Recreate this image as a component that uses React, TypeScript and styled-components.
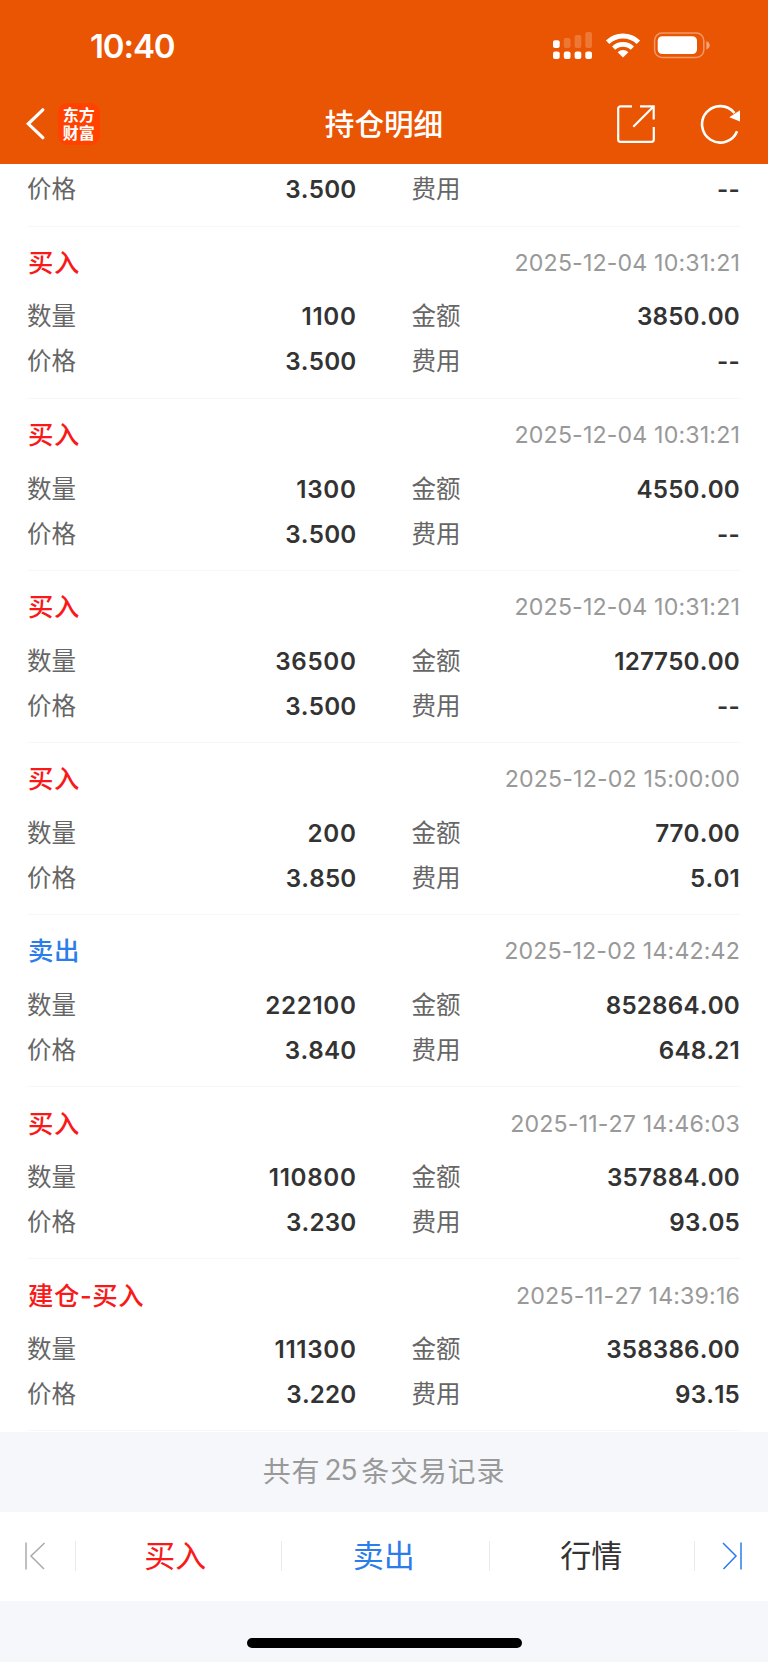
import React from "react";
import styled, { createGlobalStyle } from "styled-components";

const GlobalStyle = createGlobalStyle`
  * { box-sizing: border-box; }
  body {
    margin: 0;
    background: #f6f7fa;
    font-family: Inter, "Noto Sans CJK SC", sans-serif;
    -webkit-font-smoothing: antialiased;
  }
`;

const Screen = styled.div`
  width: 768px;
  height: 1662px;
  overflow: hidden;
  display: flex;
  flex-direction: column;
  background: #f6f7fa;
`;

const Header = styled.header`
  flex: none;
  height: 163.5px;
  background: #ea5504;
  color: #fff;
`;

const StatusBar = styled.div`
  height: 84px;
  padding: 8px 58px 0 90px;
  display: flex;
  align-items: center;
  justify-content: space-between;
`;

const Clock = styled.span`
  font-size: 33px;
  line-height: 40px;
  font-weight: 600;
  letter-spacing: -1.1px;
`;

const NavBar = styled.div`
  height: 79.5px;
  padding: 0 26px 0 26px;
  display: grid;
  grid-template-columns: 200px 1fr 200px;
  align-items: center;
`;

const NavLeft = styled.div`
  display: flex;
  align-items: center;
  gap: 12px;
`;

const NavRight = styled.div`
  display: flex;
  align-items: center;
  justify-content: flex-end;
  gap: 45px;
`;

const NavTitle = styled.h1`
  margin: 0;
  text-align: center;
  font-size: 29.6px;
  line-height: 40px;
  font-weight: 500;
`;

const Logo = styled.div`
  width: 42.5px;
  height: 42.5px;
  border-radius: 9px;
  background: #ff4200;
  display: flex;
  flex-direction: column;
  align-items: center;
  justify-content: center;
  font-size: 16px;
  line-height: 18px;
  font-weight: 700;
`;

const List = styled.main`
  flex: none;
  height: 1268px;
  background: #fff;
  padding: 0 27px;
`;

const Entry = styled.section<{ $partial?: boolean }>`
  height: ${(p) => (p.$partial ? "63.1px" : "172.13px")};
  padding-top: ${(p) => (p.$partial ? "3px" : "14.4px")};
  border-bottom: 1.5px solid #f6f7f8;
`;

const EntryHead = styled.div`
  height: 53.4px;
  padding: 0 1px;
  display: flex;
  justify-content: space-between;
  line-height: 44px;
`;

const toneColors = { buy: "#fa1919", sell: "#2b7de9", plain: "#333" };
type Tone = keyof typeof toneColors;

const Kind = styled.span<{ $tone: Tone }>`
  color: ${(p) => toneColors[p.$tone]};
  font-size: 25.4px;
  font-weight: 500;
  letter-spacing: 0.6px;
`;

const Stamp = styled.time`
  color: #999;
  font-size: 23.2px;
  font-kerning: none;
  letter-spacing: 0.14px;
`;

const Pair = styled.div`
  height: 45px;
  display: grid;
  grid-template-columns: 329.5px 1fr;
  column-gap: 55px;
  padding: 0 1px 0 0;
`;

const Cell = styled.div`
  display: flex;
  align-items: center;
  justify-content: space-between;
  line-height: 45px;
`;

const Label = styled.span`
  color: #666;
  font-size: 24.5px;
`;

const Value = styled.span<{ $whole?: boolean }>`
  color: #333;
  font-size: 24.2px;
  font-weight: 600;
  letter-spacing: ${(p) => (p.$whole ? "0.65px" : "0.2px")};
  font-kerning: none;
`;

const Summary = styled.div`
  flex: none;
  height: 80.5px;
  padding-bottom: 3px;
  display: flex;
  align-items: center;
  justify-content: center;
  color: #999;
  font-size: 28px;
  letter-spacing: 0.8px;
`;

const Count = styled.span`
  margin: 0 4.500px 0 4px;
  letter-spacing: -0.900px;
`;

const ActionBar = styled.footer`
  flex: none;
  height: 88.5px;
  background: #fff;
  display: grid;
  grid-template-columns: 75px 206px 208px 205px 1fr;
  align-items: center;
`;

const Action = styled.div<{ $tone: Tone; $shift?: number }>`
  height: 30px;
  display: flex;
  align-items: center;
  justify-content: center;
  border-left: 1px solid #e9eaec;
  padding-right: ${(p) => p.$shift ?? 0}px;
  color: ${(p) => toneColors[p.$tone]};
  font-size: 31px;
  line-height: 30px;
`;

const Pager = styled.div<{ $end?: boolean }>`
  height: 30px;
  display: flex;
  align-items: center;
  padding-left: ${(p) => (p.$end ? "27px" : "25px")};
  border-left: ${(p) => (p.$end ? "1px solid #e9eaec" : "none")};
`;

const HomeArea = styled.div`
  flex: 1;
  display: flex;
  justify-content: center;
  padding-top: 37.5px;
`;

const HomeIndicator = styled.div`
  width: 275px;
  height: 9.5px;
  border-radius: 5px;
  background: #000;
`;

const StatusIcons = () => (
  <svg width="157" height="28" viewBox="553 32 157 28" fill="#fff">
    <rect x="553" y="40.3" width="6.7" height="7.7" rx="2" />
    <g opacity="0.2">
      <rect x="563.8" y="38" width="6.7" height="10" rx="2" />
      <rect x="574.6" y="35" width="6.7" height="13" rx="2" />
      <rect x="585.3" y="32" width="6.7" height="16" rx="2" />
    </g>
    {[553, 563.8, 574.6, 585.3].map((x) => (
      <rect key={x} x={x} y="51.6" width="6.7" height="7.4" rx="2" />
    ))}
    <g fill="none" stroke="#fff" strokeWidth="5">
      <path d="M607.6 42.2a22.2 22.2 0 0 1 30.8 0" />
      <path d="M613.6 48.1a13.6 13.6 0 0 1 18.8 0" strokeWidth="4.6" />
    </g>
    <path d="M623 57.5l-5.4-5.3a7.7 7.7 0 0 1 10.8 0z" />
    <rect x="654.6" y="33" width="49.2" height="24.4" rx="7.5" fill="none" stroke="#fff" strokeOpacity="0.4" strokeWidth="1.5" />
    <rect x="657.7" y="36.3" width="39.3" height="17.8" rx="4.5" />
    <path d="M706.3 41.2c4.6 1 4.6 7.2 0 8.2z" opacity="0.45" />
  </svg>
);

const BackIcon = () => (
  <svg width="19.5" height="33" viewBox="26 107.5 19.5 33" fill="none" stroke="#fff" strokeWidth="3.2">
    <path d="M42.8 110.3L28.3 124.3l14.5 13.9" strokeLinecap="round" />
  </svg>
);

const ShareIcon = () => (
  <svg width="38" height="38" viewBox="0 0 38 38" fill="none" stroke="#fff" strokeWidth="2.2">
    <path d="M15 1.3H3.5a2.3 2.3 0 0 0-2.3 2.3V34.5a2.3 2.3 0 0 0 2.3 2.3H34.5a2.3 2.3 0 0 0 2.3-2.3V22" />
    <path d="M23 1.3H36.7V14.5M36.3 1.7L16.3 21.7" />
  </svg>
);

const RefreshIcon = () => (
  <svg width="42" height="40" viewBox="700 104 42 40">
    <path d="M737.1 131.2A18.2 18.2 0 1 1 734.5 113" fill="none" stroke="#fff" strokeWidth="2.6" />
    <path d="M740 110.3L729.3 117.3L740 121.5z" fill="#fff" />
  </svg>
);

const PageIcon = ({ end }: { end?: boolean }) => (
  <svg width="21" height="28" viewBox="0 0 21 28" fill="none" stroke={end ? "#2b7de9" : "#aaa"} strokeWidth="1.5">
    <path d={end ? "M1 1l13 13L1.5 27M19 0.5v27" : "M1 0.5v27M19.5 1L6 14l13 13"} />
  </svg>
);

interface Trade {
  kind: string;
  tone: Tone;
  time: string;
  qty: string;
  amount: string;
  price: string;
  fee: string;
}

const trades: Trade[] = [
  { kind: "买入", tone: "buy", time: "2025-12-04 10:31:21", qty: "1100", amount: "3850.00", price: "3.500", fee: "--" },
  { kind: "买入", tone: "buy", time: "2025-12-04 10:31:21", qty: "1300", amount: "4550.00", price: "3.500", fee: "--" },
  { kind: "买入", tone: "buy", time: "2025-12-04 10:31:21", qty: "36500", amount: "127750.00", price: "3.500", fee: "--" },
  { kind: "买入", tone: "buy", time: "2025-12-02 15:00:00", qty: "200", amount: "770.00", price: "3.850", fee: "5.01" },
  { kind: "卖出", tone: "sell", time: "2025-12-02 14:42:42", qty: "222100", amount: "852864.00", price: "3.840", fee: "648.21" },
  { kind: "买入", tone: "buy", time: "2025-11-27 14:46:03", qty: "110800", amount: "357884.00", price: "3.230", fee: "93.05" },
  { kind: "建仓-买入", tone: "buy", time: "2025-11-27 14:39:16", qty: "111300", amount: "358386.00", price: "3.220", fee: "93.15" },
];

const FieldPair = ({ items }: { items: [string, string][] }) => (
  <Pair>
    {items.map(([label, value]) => (
      <Cell key={label}>
        <Label>{label}</Label>
        <Value $whole={/^\d+$/.test(value)}>{value}</Value>
      </Cell>
    ))}
  </Pair>
);

export default function App() {
  return (
    <>
      <GlobalStyle />
      <Screen>
        <Header>
          <StatusBar>
            <Clock>10:40</Clock>
            <StatusIcons />
          </StatusBar>
          <NavBar>
            <NavLeft>
              <BackIcon />
              <Logo>
                <span>东方</span>
                <span>财富</span>
              </Logo>
            </NavLeft>
            <NavTitle>持仓明细</NavTitle>
            <NavRight>
              <ShareIcon />
              <RefreshIcon />
            </NavRight>
          </NavBar>
        </Header>
        <List>
          <Entry $partial>
            <FieldPair items={[["价格", "3.500"], ["费用", "--"]]} />
          </Entry>
          {trades.map((t, i) => (
            <Entry key={i}>
              <EntryHead>
                <Kind $tone={t.tone}>{t.kind}</Kind>
                <Stamp>{t.time}</Stamp>
              </EntryHead>
              <FieldPair items={[["数量", t.qty], ["金额", t.amount]]} />
              <FieldPair items={[["价格", t.price], ["费用", t.fee]]} />
            </Entry>
          ))}
        </List>
        <Summary>
          共有<Count>25</Count>条交易记录
        </Summary>
        <ActionBar>
          <Pager>
            <PageIcon />
          </Pager>
          <Action $tone="buy" $shift={6.5}>买入</Action>
          <Action $tone="sell" $shift={3.5}>卖出</Action>
          <Action $tone="plain" $shift={1.5}>行情</Action>
          <Pager $end>
            <PageIcon end />
          </Pager>
        </ActionBar>
        <HomeArea>
          <HomeIndicator />
        </HomeArea>
      </Screen>
    </>
  );
}
